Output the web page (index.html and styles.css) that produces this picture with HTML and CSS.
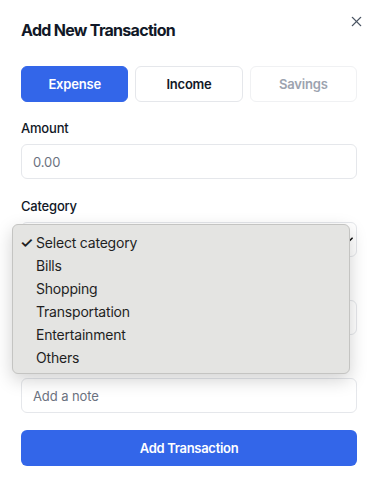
FILE: index.html
```html
<!DOCTYPE html>
<html lang="en">
<head>
  <meta charset="UTF-8" />
  <meta name="viewport" content="width=device-width, initial-scale=1.0"/>
  <title>Add New Transaction</title>
  <link rel="stylesheet" href="styles.css">
</head>
<body>
  <div class="modal">
    <h2 class="modal-title">Add New Transaction</h2>
    <button class="close-btn" aria-label="Close">
      <svg viewBox="0 0 12 12" width="11" height="11">
        <line x1="1.5" y1="1.5" x2="10.5" y2="10.5" stroke="#4b5563" stroke-width="1.5" stroke-linecap="round"/>
        <line x1="10.5" y1="1.5" x2="1.5" y2="10.5" stroke="#4b5563" stroke-width="1.5" stroke-linecap="round"/>
      </svg>
    </button>

    <!-- TIPO -->
    <div class="tabs">
      <button class="tab active">Expense</button>
      <button class="tab">Income</button>
      <button class="tab disabled">Savings</button>
    </div>

    <div class="form">
      <div class="field">
        <label>Amount</label>
        <div class="input placeholder">0.00</div>
      </div>

      <div class="field category">
        <label>Category</label>
        <div class="input select">
          <svg class="chevron" viewBox="0 0 10 6" width="9" height="6">
            <path d="M1 1l4 4 4-4" fill="none" stroke="#111" stroke-width="1.8" stroke-linecap="round" stroke-linejoin="round"/>
          </svg>
        </div>

        <!-- menu abierto -->
        <ul class="dropdown">
          <li class="selected"><span class="check">✓</span>Select category</li>
          <li>Bills</li>
          <li>Shopping</li>
          <li>Transportation</li>
          <li>Entertainment</li>
          <li>Others</li>
        </ul>
      </div>

      <div class="field">
        <label class="hidden-label">Date</label>
        <div class="input"></div>
      </div>

      <div class="field">
        <label class="hidden-label">Note</label>
        <div class="input placeholder">Add a note</div>
      </div>
    </div>

    <button class="submit-btn">Add Transaction</button>
  </div>
</body>
</html>
```

FILE: styles.css
```css
html, body {
  margin: 0;
  padding: 0;
  background: #fff;
  font-family: Inter, "Noto Sans", sans-serif;
  color: #111827;
}

.modal {
  position: relative;
  padding: 18px 22px 20px 21px;
}

.modal-title {
  margin: 0;
  font-size: 16px;
  line-height: 24px;
  font-weight: 700;
  letter-spacing: -0.7px;
}

.close-btn {
  position: absolute;
  top: 14px;
  right: 16px;
  width: 14px;
  height: 14px;
  padding: 0;
  border: none;
  background: none;
  display: flex;
  align-items: center;
  justify-content: center;
}

.tabs {
  margin-top: 24px;
  display: grid;
  grid-template-columns: 1fr 1fr 1fr;
  gap: 7px;
}

.tab {
  height: 36px;
  border: 1px solid #e5e7eb;
  border-radius: 6px;
  background: #fff;
  font-family: inherit;
  font-size: 13px;
  font-weight: 600;
  letter-spacing: -0.2px;
  color: #111827;
}

.tab.active {
  background: #3366e9;
  border-color: #3366e9;
  color: #fff;
}

.tab.disabled {
  border-color: #f0f1f3;
  color: #9ca3af;
}

.form {
  margin-top: 16px;
  display: flex;
  flex-direction: column;
  gap: 17px;
}

.field {
  display: flex;
  flex-direction: column;
}

.field label {
  font-size: 13px;
  line-height: 20px;
  font-weight: 500;
  letter-spacing: -0.2px;
  margin-bottom: 6px;
}

/* tapadas por el menu abierto */
.field .hidden-label {
  visibility: hidden;
}

.input {
  height: 35px;
  box-sizing: border-box;
  border: 1px solid #e5e7eb;
  border-radius: 6px;
  padding: 0 11px;
  display: flex;
  align-items: center;
  font-size: 13px;
  letter-spacing: -0.1px;
}

.placeholder {
  color: #6b7280;
}

.select {
  justify-content: flex-end;
  padding-right: 3px;
}

.category {
  position: relative;
}

.dropdown {
  position: absolute;
  top: 28px;
  left: -9px;
  width: 338px;
  margin: 0;
  padding: 6px 0 4px;
  box-sizing: border-box;
  list-style: none;
  background: #e4e4e2;
  border: 1px solid #c4c4c2;
  border-radius: 6px;
  box-shadow: 0 6px 18px rgba(0, 0, 0, 0.18);
  font-family: Inter, "Noto Sans", sans-serif;
  font-size: 14px;
  letter-spacing: -0.2px;
  color: #1f1f1f;
  z-index: 10;
}

.dropdown li {
  height: 23px;
  line-height: 23px;
  padding-left: 23px;
  position: relative;
}

.dropdown .check {
  position: absolute;
  left: 7px;
  font-size: 15px;
  font-weight: 600;
}

.submit-btn {
  margin-top: 17px;
  width: 100%;
  height: 36px;
  border: none;
  border-radius: 6px;
  background: #3366e9;
  color: #fff;
  font-family: inherit;
  font-size: 13px;
  font-weight: 600;
  letter-spacing: -0.3px;
}
```
